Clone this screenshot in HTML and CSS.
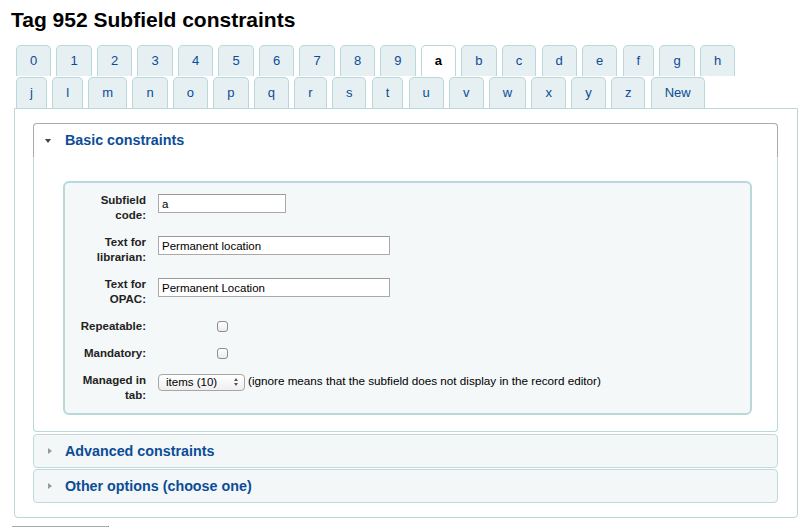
FILE: index.html
```html
<!DOCTYPE html>
<html lang="en">
<head>
<meta charset="utf-8">
<title>Tag 952 Subfield constraints</title>
<link rel="stylesheet" href="styles.css">
</head>
<body>
<h1 class="title">Tag 952 Subfield constraints</h1>
<div class="tabs">
  <ul class="tab-list">
    <li class="tab">0</li><li class="tab">1</li><li class="tab">2</li><li class="tab">3</li><li class="tab">4</li><li class="tab">5</li><li class="tab">6</li><li class="tab">7</li><li class="tab">8</li><li class="tab">9</li><li class="tab tab-active">a</li><li class="tab">b</li><li class="tab">c</li><li class="tab">d</li><li class="tab">e</li><li class="tab">f</li><li class="tab">g</li><li class="tab">h</li>
    <li class="tab">j</li><li class="tab">l</li><li class="tab">m</li><li class="tab">n</li><li class="tab">o</li><li class="tab">p</li><li class="tab">q</li><li class="tab">r</li><li class="tab">s</li><li class="tab">t</li><li class="tab">u</li><li class="tab">v</li><li class="tab">w</li><li class="tab">x</li><li class="tab">y</li><li class="tab">z</li><li class="tab">New</li>
  </ul>
  <div class="panel">
    <div class="accordion">
      <div class="acc-header acc-open"><span class="tri-down"></span>Basic constraints</div>
      <div class="acc-content">
        <div class="fields">
          <div class="row">
            <label class="lbl">Subfield code:</label>
            <input class="txt txt-short" type="text" value="a">
          </div>
          <div class="row">
            <label class="lbl">Text for librarian:</label>
            <input class="txt txt-long" type="text" value="Permanent location">
          </div>
          <div class="row">
            <label class="lbl">Text for OPAC:</label>
            <input class="txt txt-long" type="text" value="Permanent Location">
          </div>
          <div class="row">
            <label class="lbl">Repeatable:</label>
            <input class="chk" type="checkbox">
          </div>
          <div class="row">
            <label class="lbl">Mandatory:</label>
            <input class="chk" type="checkbox">
          </div>
          <div class="row">
            <label class="lbl">Managed in tab:</label>
            <span class="sel-wrap"><select class="sel"><option>items (10)</option></select></span>
            <span class="hint">(ignore means that the subfield does not display in the record editor)</span>
          </div>
        </div>
      </div>
      <div class="acc-header acc-closed acc-first"><span class="tri-right"></span>Advanced constraints</div>
      <div class="acc-header acc-closed acc-second"><span class="tri-right"></span>Other options (choose one)</div>
    </div>
  </div>
</div>
<div class="actions"><div class="save-edge"></div></div>
</body>
</html>
```
FILE: styles.css
```css
body {
  margin: 0;
  background: #fff;
  color: #000;
  font-family: "Liberation Sans", Arial, sans-serif;
}

.title {
  margin: 0;
  padding: 8px 0 0 11px;
  font-size: 21px;
  line-height: 24px;
  font-weight: bold;
}

.tabs {
  margin: 13px 9px 0 14px;
}

.tab-list {
  list-style: none;
  margin: 0;
  padding: 0 0 0 2px;
  display: flex;
  flex-wrap: wrap;
  column-gap: 5.25px;
  row-gap: 1px;
  width: 725px;
}

.tab {
  height: 30px;
  line-height: 30px;
  padding: 0 13px;
  border: 1px solid #b9d8d9;
  border-bottom: 0;
  border-radius: 5px 5px 0 0;
  background: #e6eff1;
  color: #0b4c97;
  font-size: 13px;
}

.tab-active {
  background: #fff;
  color: #000;
  font-weight: bold;
}

.panel {
  border: 1px solid #b9d8d9;
  border-radius: 0 0 4px 4px;
  padding: 14px 19px 14px 18px;
}

.acc-header {
  display: flex;
  align-items: center;
  font-size: 14.3px;
  font-weight: bold;
  color: #0b4c97;
  padding: 8px 0 8px 11px;
}

.acc-open {
  background: #fff;
  border: 1px solid #aaa;
  border-bottom: 0;
  border-radius: 4px 4px 0 0;
  line-height: 17px;
}

.acc-closed {
  background: #f3f7f7;
  border: 1px solid #bfd9da;
  border-radius: 4px;
  line-height: 16px;
}

.acc-first {
  margin-top: 2px;
}

.acc-second {
  margin-top: 1px;
}

.tri-down {
  width: 0;
  height: 0;
  border-left: 3.5px solid transparent;
  border-right: 3.5px solid transparent;
  border-top: 4px solid #444;
  margin-right: 14px;
}

.tri-right {
  width: 0;
  height: 0;
  border-top: 3.5px solid transparent;
  border-bottom: 3.5px solid transparent;
  border-left: 4px solid #999;
  margin-left: 3px;
  margin-right: 13px;
}

.acc-content {
  border: 1px solid #b9d8d9;
  border-top: 0;
  border-radius: 0 0 4px 4px;
  padding: 24px 25px 16px 29px;
}

.fields {
  background: #f4f8f8;
  border: 2px solid #b9d8d9;
  border-radius: 6px;
  padding: 10px 11px;
}

.row {
  display: flex;
  align-items: flex-start;
  margin-bottom: 12px;
}

.row:last-child {
  margin-bottom: 0;
}

.lbl {
  flex: 0 0 70px;
  width: 70px;
  margin-right: 12px;
  text-align: right;
  font-size: 11.5px;
  font-weight: bold;
  line-height: 15px;
  color: #222;
}

.txt {
  box-sizing: border-box;
  height: 19px;
  margin: 1px 0 0 0;
  padding: 0 3px;
  border: 1px solid #a9a9a9;
  border-top-color: #999;
  background: #fff;
  font-family: "Liberation Sans", Arial, sans-serif;
  font-size: 11.5px;
  color: #000;
}

.txt-short {
  width: 128px;
}

.txt-long {
  width: 232px;
}

.chk {
  appearance: none;
  -webkit-appearance: none;
  box-sizing: border-box;
  width: 11px;
  height: 11px;
  margin: 2px 0 0 59px;
  border: 1px solid #8c8c8c;
  border-radius: 3px;
  background: linear-gradient(#fff, #ececec);
}

.sel-wrap {
  position: relative;
  display: block;
  margin-top: 1px;
}

.sel {
  appearance: none;
  -webkit-appearance: none;
  box-sizing: border-box;
  display: block;
  width: 87px;
  height: 17px;
  margin: 0;
  padding: 0 0 0 7px;
  border: 1px solid #a6a6a6;
  border-radius: 4px;
  background: linear-gradient(#fff, #efefef);
  font-family: "Liberation Sans", Arial, sans-serif;
  font-size: 11.5px;
  line-height: 15px;
  color: #000;
}

.sel-wrap::before,
.sel-wrap::after {
  content: "";
  position: absolute;
  right: 7px;
  width: 0;
  height: 0;
  border-left: 2.5px solid transparent;
  border-right: 2.5px solid transparent;
}

.sel-wrap::before {
  top: 4px;
  border-bottom: 3px solid #555;
}

.sel-wrap::after {
  top: 9px;
  border-top: 3px solid #555;
}

.hint {
  margin-left: 3px;
  font-size: 11.7px;
  line-height: 15px;
  white-space: nowrap;
}

.actions {
  padding: 8px 0 0 12px;
}

.save-edge {
  width: 96px;
  height: 0;
  border-top: 1px solid #aaa;
  border-right: 1px solid #555;
}
```
